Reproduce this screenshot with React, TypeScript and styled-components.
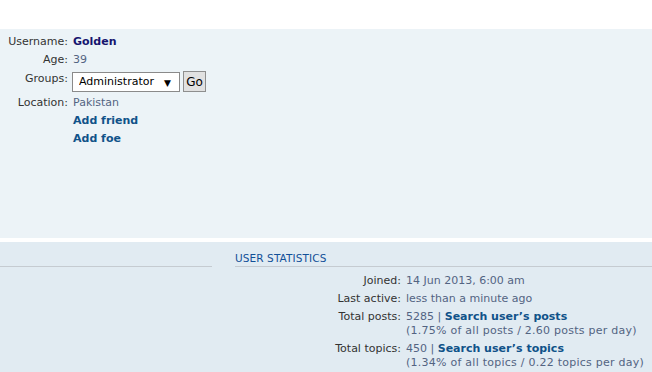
import styled, { createGlobalStyle } from "styled-components";

const GlobalStyle = createGlobalStyle`
  html, body {
    margin: 0;
    padding: 0;
    background: #ffffff;
  }
  body {
    font-family: "DejaVu Sans", Verdana, sans-serif;
    font-size: 11px;
    color: #333333;
  }
`;

const Page = styled.div`
  padding-top: 29px;
  display: flex;
  flex-direction: column;
  gap: 4px;
`;

const Panel = styled.div<{ $tone: "light" | "dark" }>`
  background: ${(p) => (p.$tone === "light" ? "#ecf3f7" : "#e1ebf2")};
  padding: ${(p) => (p.$tone === "light" ? "6px 0 0" : "9px 0 10px")};
  height: ${(p) => (p.$tone === "light" ? "209px" : "auto")};
  box-sizing: border-box;
`;

const Details = styled.dl<{ $labelWidth: string }>`
  margin: 0;
  display: grid;
  grid-template-columns: ${(p) => p.$labelWidth} 1fr;
  column-gap: 5px;
  row-gap: 4px;
  align-items: start;
  line-height: 14px;
`;

const Label = styled.dt<{ $offset?: number }>`
  text-align: right;
  color: #333333;
  white-space: nowrap;
  padding-top: ${(p) => p.$offset ?? 0}px;
`;

const Value = styled.dd<{ $muted?: boolean }>`
  margin: 0;
  grid-column: 2;
  color: ${(p) => (p.$muted ? "#536482" : "#333333")};
  white-space: nowrap;
`;

const UserName = styled.span`
  color: #16156e;
  font-weight: bold;
`;

const Link = styled.a`
  color: #105289;
  font-weight: bold;
  text-decoration: none;
`;

const Note = styled.span`
  display: block;
  letter-spacing: 0.25px;
`;

const GroupForm = styled.div`
  display: flex;
  align-items: center;
  gap: 3px;
  margin-left: -1px;
`;

const SelectWrap = styled.div`
  position: relative;
  width: 108px;
  height: 20px;
`;

const Select = styled.select`
  appearance: none;
  width: 100%;
  height: 100%;
  box-sizing: border-box;
  border: 1px solid #8a8a8a;
  background: #ffffff;
  font-family: "DejaVu Sans", Verdana, sans-serif;
  font-size: 11px;
  color: #000000;
  padding: 0 0 0 6px;
  margin: 0;
  border-radius: 0;
`;

const Arrow = styled.span`
  position: absolute;
  right: 9px;
  top: 4px;
  font-size: 9px;
  color: #000000;
  pointer-events: none;
`;

const GoButton = styled.button`
  height: 21px;
  width: 23px;
  box-sizing: border-box;
  padding: 0;
  border: 1px solid #8e8e8e;
  background: #e1e1e1;
  font-family: "DejaVu Sans", Verdana, sans-serif;
  font-size: 12px;
  color: #000000;
  border-radius: 0;
`;

const Columns = styled.div`
  display: grid;
  grid-template-columns: 212px 1fr;
  column-gap: 23px;
`;

const Heading = styled.h3`
  margin: 0 0 7px;
  height: 15px;
  padding-bottom: 0;
  border-bottom: 1px solid #c5cbd1;
  font-size: 10.5px;
  font-weight: normal;
  text-transform: uppercase;
  color: #115098;
  line-height: 14px;
  letter-spacing: 0.1px;
`;

export default function App() {
  return (
    <>
      <GlobalStyle />
      <Page>
        <Panel $tone="light">
          <Details $labelWidth="68px">
            <Label>Username:</Label>
            <Value>
              <UserName>Golden</UserName>
            </Value>
            <Label>Age:</Label>
            <Value $muted>39</Value>
            <Label $offset={1}>Groups:</Label>
            <Value>
              <GroupForm>
                <SelectWrap>
                  <Select defaultValue="admin">
                    <option value="admin">Administrator</option>
                  </Select>
                  <Arrow>▼</Arrow>
                </SelectWrap>
                <GoButton>Go</GoButton>
              </GroupForm>
            </Value>
            <Label>Location:</Label>
            <Value $muted>Pakistan</Value>
            <Value>
              <Link href="#">Add friend</Link>
            </Value>
            <Value>
              <Link href="#">Add foe</Link>
            </Value>
          </Details>
        </Panel>
        <Panel $tone="dark">
          <Columns>
            <div>
              <Heading />
            </div>
            <div>
              <Heading>User statistics</Heading>
              <Details $labelWidth="166px">
                <Label>Joined:</Label>
                <Value $muted>14 Jun 2013, 6:00 am</Value>
                <Label>Last active:</Label>
                <Value $muted>less than a minute ago</Value>
                <Label>Total posts:</Label>
                <Value $muted>
                  5285 | <Link href="#">Search user’s posts</Link>
                  <Note>(1.75% of all posts / 2.60 posts per day)</Note>
                </Value>
                <Label>Total topics:</Label>
                <Value $muted>
                  450 | <Link href="#">Search user’s topics</Link>
                  <Note>(1.34% of all topics / 0.22 topics per day)</Note>
                </Value>
              </Details>
            </div>
          </Columns>
        </Panel>
      </Page>
    </>
  );
}
